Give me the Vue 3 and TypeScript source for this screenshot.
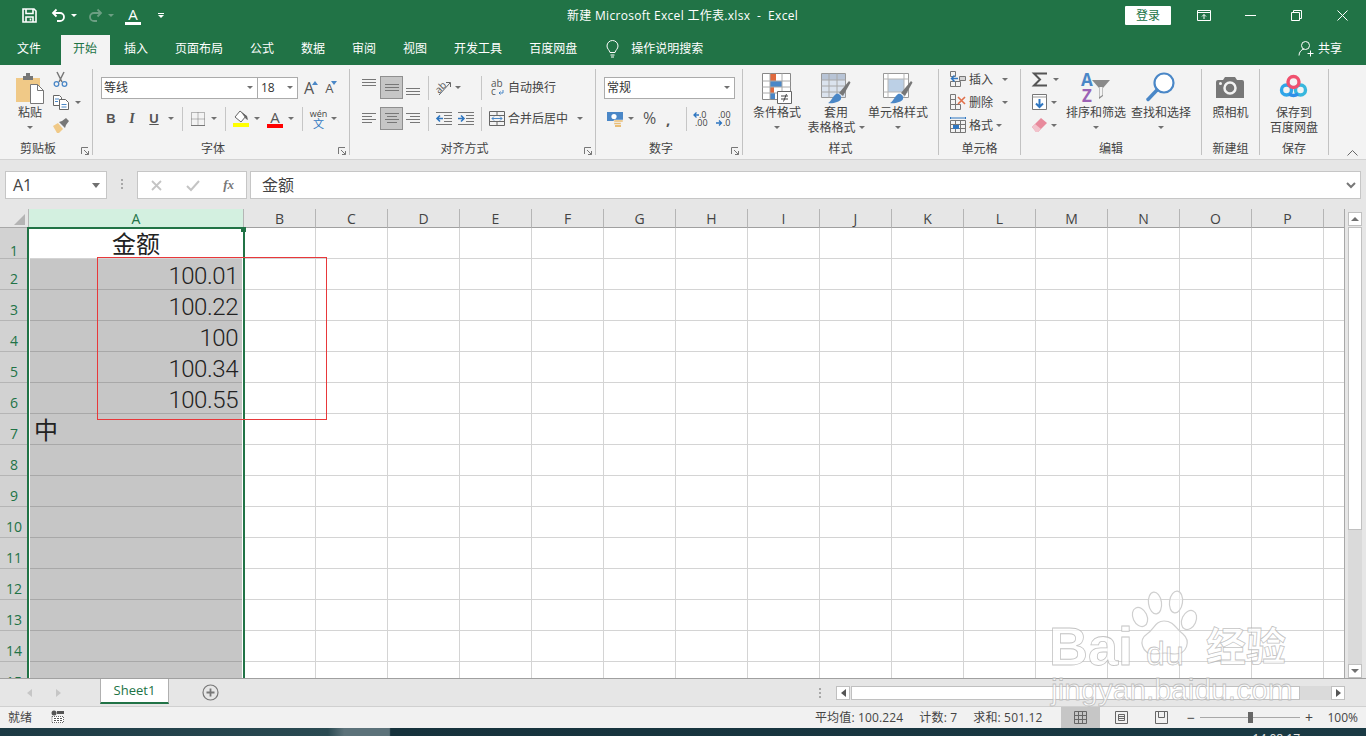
<script setup lang="ts">
const tabs = ['插入', '页面布局', '公式', '数据', '审阅', '视图', '开发工具', '百度网盘']
const colLetters = 'BCDEFGHIJKLMNOP'.split('')
const rows = Array.from({ length: 15 }, (_, i) => i + 1)
const colCount = colLetters.length + 1

const amounts: Record<number, string> = {
  2: '100.01',
  3: '100.22',
  4: '100',
  5: '100.34',
  6: '100.55',
}
</script>

<template>
  <div class="app">
    <!-- title bar -->
    <header class="titlebar">
      <div class="tb-side qa">
        <svg class="w15" width="15" height="15" viewBox="0 0 15 15" fill="none" stroke="#fff" stroke-width="1.6">
          <path d="M1 1h11l2 2v11H1z" />
          <path d="M4 1v4.500h7V1M4 14V9h7v5" />
          <path d="M8.500 10.500v2" />
        </svg>
        <svg class="ml14" width="15" height="15" viewBox="0 0 15 15" fill="none" stroke="#fff" stroke-width="1.8">
          <path d="M5.500 1.500 2 5l3.500 3.500" />
          <path d="M2.500 5H9a4 4 0 0 1 0 8H6" />
        </svg>
        <i class="caret caret-white ml5"></i>
        <svg class="ml11" width="15" height="15" viewBox="0 0 15 15" fill="none" stroke="#6c9f83" stroke-width="1.8">
          <path d="M9.500 1.500 13 5 9.500 8.500" />
          <path d="M12.500 5H6a4 4 0 0 0 0 8h3" />
        </svg>
        <i class="caret caret-dim ml5"></i>
        <span class="qa-font ml11">A</span>
        <span class="qa-more">
          <i class="dash"></i>
          <i class="caret caret-white"></i>
        </span>
      </div>
      <div class="doc-title">新建 Microsoft Excel 工作表.xlsx &nbsp;-&nbsp; Excel</div>
      <div class="tb-side win">
        <button class="login">登录</button>
        <svg class="ml26" width="14" height="11" viewBox="0 0 14 11" fill="none" stroke="#fff">
          <path d="M.5.500h13v10H.5zM.5 2.500h13" />
          <path d="M7 9V4.500M5 6.500l2-2 2 2" />
        </svg>
        <svg class="ml34" width="11" height="11" viewBox="0 0 11 11" stroke="#fff"><path d="M0 5.500h11" /></svg>
        <svg class="ml35" width="11" height="11" viewBox="0 0 11 11" fill="none" stroke="#fff">
          <path d="M.5 2.500h8v8h-8zM2.500 2.500v-2h8v8h-2" />
        </svg>
        <svg class="ml35" width="11" height="11" viewBox="0 0 11 11" stroke="#fff"><path d="M.5.500l10 10M10.500.500l-10 10" /></svg>
      </div>
    </header>

    <nav class="tabbar">
      <span class="tab tab-file">文件</span>
      <span class="tab tab-on">开始</span>
      <span v-for="t in tabs" :key="t" class="tab">{{ t }}</span>
      <svg class="bulb" width="13" height="18" viewBox="0 0 13 18" fill="none" stroke="#fff">
        <path d="M4 12.500C3.500 10 1 9 1 6a5.500 5.500 0 0 1 11 0c0 3-2.500 4-3 6.500z" />
        <path d="M4.500 15h4M5 17h3" />
      </svg>
      <span class="search">操作说明搜索</span>
      <span class="share">
        <svg width="17" height="17" viewBox="0 0 17 17" fill="none" stroke="#fff">
          <circle cx="7.500" cy="5.500" r="4" />
          <path d="M1 15.500c0-3.500 2.500-6 5-6.500M12.500 10.500v6M9.500 13.500h6" />
        </svg>
        共享
      </span>
    </nav>

    <!-- ribbon -->
    <section class="ribbon">
      <div class="group g-clip">
        <div class="group-body">
          <div class="big-btn paste">
            <svg class="big-icon" width="28" height="33" viewBox="0 0 28 33">
              <path d="M0 6h24v24H0z" fill="#f0c987" />
              <path d="M7 4h3V1h4v3h3v4H7z" fill="#767676" />
              <path d="M14.500 12.500h7l6 6v13h-13z" fill="#fff" stroke="#777" />
              <path d="M21.500 12.500v6h6" fill="none" stroke="#777" />
            </svg>
            <span>粘贴</span>
            <span class="line"><i class="caret"></i></span>
          </div>
          <div class="tri-rows clip-side">
            <div class="tri-row">
              <svg width="15" height="16" viewBox="0 0 15 16" fill="none">
                <path d="M4 1l5 10M11 1L6 11" stroke="#777" stroke-width="1.500" />
                <circle cx="3.500" cy="13" r="2.300" stroke="#4a87c7" stroke-width="1.300" />
                <circle cx="11.500" cy="13" r="2.300" stroke="#4a87c7" stroke-width="1.300" />
              </svg>
            </div>
            <div class="tri-row">
              <svg width="16" height="15" viewBox="0 0 16 15" fill="#fff" stroke="#666">
                <path d="M.5.500h6l2 2v8h-8z" />
                <path d="M6.500 4.500h6l3 3v7h-9z" />
                <path d="M2 4h4M2 6.500h3M8.500 9.500h5M8.500 12h5" stroke="#4a87c7" />
              </svg>
              <i class="caret ml6"></i>
            </div>
            <div class="tri-row">
              <svg width="16" height="15" viewBox="0 0 16 15">
                <path d="M0 8l5-3 5 6-4 4H4z" fill="#f0c987" />
                <path d="M6 4l3-1 4-3 3 3-3 4-1 3z" fill="#777" />
              </svg>
            </div>
          </div>
        </div>
        <div class="group-label has-launcher">
          剪贴板
          <svg class="launcher" width="8" height="8" viewBox="0 0 8 8" fill="none" stroke="#777">
            <path d="M.5 7V.5H7M3 3l4.500 4.500M7.500 4v3.500H4" />
          </svg>
        </div>
      </div>

      <div class="group g-font">
        <div class="rows">
          <div class="row">
            <div class="combo combo-font">等线<i class="caret combo-caret"></i></div>
            <div class="combo combo-size">18<i class="caret combo-caret"></i></div>
            <span class="grow-a ml6">A<svg width="6" height="4" viewBox="0 0 6 4"><path d="M0 4l3-4 3 4z" fill="#4a87c7" /></svg></span>
            <span class="shrink-a ml10">A<svg width="6" height="4" viewBox="0 0 6 4"><path d="M0 0l3 4 3-4z" fill="#4a87c7" /></svg></span>
          </div>
          <div class="row">
            <span class="cell w20 fmt fmt-b">B</span>
            <span class="cell w22 fmt fmt-i">I</span>
            <span class="cell w22 fmt fmt-u">U</span>
            <span class="cell w12"><i class="caret"></i></span>
            <span class="cell w11"><i class="vsep"></i></span>
            <span class="cell w19">
              <svg width="14" height="14" viewBox="0 0 14 14" fill="none" stroke="#777" stroke-dasharray="1 1">
                <path d="M.5.500h13v13H.5zM.5 7h13M7 .500v13" />
                <path d="M0 13.500h14" stroke-dasharray="none" />
              </svg>
            </span>
            <span class="cell w14"><i class="caret"></i></span>
            <span class="cell w8"><i class="vsep"></i></span>
            <span class="cell w24">
              <svg width="16" height="17" viewBox="0 0 16 17">
                <path d="M7 1l6 5-5 6-6-5z" fill="#fff" stroke="#666" />
                <path d="M8 2l6 4 1 4-2-1z" fill="#666" />
                <path d="M0 13h16v4H0z" fill="#ffff00" />
              </svg>
            </span>
            <span class="cell w8"><i class="caret"></i></span>
            <span class="cell w28 color-a">A<i class="color-bar"></i></span>
            <span class="cell w4"><i class="caret"></i></span>
            <span class="cell w18"><i class="vsep"></i></span>
            <span class="cell w15 wen"><em>wén</em><b>文</b></span>
            <span class="cell w16"><i class="caret"></i></span>
          </div>
        </div>
        <div class="group-label has-launcher">
          字体
          <svg class="launcher" width="8" height="8" viewBox="0 0 8 8" fill="none" stroke="#777">
            <path d="M.5 7V.5H7M3 3l4.500 4.500M7.500 4v3.500H4" />
          </svg>
        </div>
      </div>

      <div class="group g-align">
        <div class="rows">
          <div class="row">
            <svg width="14" height="23" viewBox="0 0 14 23" stroke="#777"><path d="M0 3.500h14M0 6.500h14M0 9.500h14" /></svg>
            <span class="active-btn ml4">
              <svg width="14" height="21" viewBox="0 0 14 21" stroke="#777"><path d="M0 7.500h14M0 10.500h14M0 13.500h14" /></svg>
            </span>
            <svg class="ml3" width="14" height="23" viewBox="0 0 14 23" stroke="#777"><path d="M0 12.500h14M0 15.500h14M0 18.500h14" /></svg>
            <i class="vsep ml8"></i>
            <svg class="ml7" width="16" height="16" viewBox="0 0 16 16" fill="none">
              <text x="0" y="11" transform="rotate(-45 5 9)" class="svg-txt">ab</text>
              <path d="M3 15L14 3M10 2.500h4.500V7" stroke="#666" />
            </svg>
            <i class="caret ml3"></i>
            <i class="vsep ml20"></i>
            <svg class="ml9" width="13" height="16" viewBox="0 0 13 16" fill="none">
              <text x="0" y="7" class="svg-txt">ab</text>
              <text x="0" y="15" class="svg-txt">c</text>
              <path d="M12 10v3H8M9.500 11.500 8 13l1.500 1.500" stroke="#4a87c7" />
            </svg>
            <span class="ml4">自动换行</span>
          </div>
          <div class="row">
            <svg width="14" height="23" viewBox="0 0 14 23" stroke="#777"><path d="M0 6.500h14M0 9.500h10M0 12.500h14M0 15.500h10" /></svg>
            <span class="active-btn ml4">
              <svg width="14" height="21" viewBox="0 0 14 21" stroke="#777"><path d="M0 5.500h14M2 8.500h10M0 11.500h14M2 14.500h10" /></svg>
            </span>
            <svg class="ml3" width="14" height="23" viewBox="0 0 14 23" stroke="#777"><path d="M0 6.500h14M4 9.500h10M0 12.500h14M4 15.500h10" /></svg>
            <i class="vsep ml8"></i>
            <svg class="ml7" width="16" height="14" viewBox="0 0 16 14" fill="none">
              <path d="M0 .500h16M8 3.500h8M8 6.500h8M8 9.500h8M0 12.500h16" stroke="#777" />
              <path d="M7 6.500H1M4 3.500l-3 3 3 3" stroke="#2f76c0" stroke-width="1.600" />
            </svg>
            <svg class="ml6" width="16" height="14" viewBox="0 0 16 14" fill="none">
              <path d="M0 .500h16M8 3.500h8M8 6.500h8M8 9.500h8M0 12.500h16" stroke="#777" />
              <path d="M0 6.500h6M3 3.500l3 3-3 3" stroke="#2f76c0" stroke-width="1.600" />
            </svg>
            <i class="vsep ml7"></i>
            <svg class="ml7" width="16" height="15" viewBox="0 0 16 15" fill="none">
              <path d="M.5.500h15v14H.5zM.5 4.500h15M.5 10.500h15M8 .500v4M8 10.500v4" stroke="#666" />
              <path d="M3 7.500h10M5 5.500l-2 2 2 2M11 5.500l2 2-2 2" stroke="#4a87c7" />
            </svg>
            <span class="ml3">合并后居中</span>
            <i class="caret ml9"></i>
          </div>
        </div>
        <div class="group-label has-launcher">
          对齐方式
          <svg class="launcher" width="8" height="8" viewBox="0 0 8 8" fill="none" stroke="#777">
            <path d="M.5 7V.5H7M3 3l4.500 4.500M7.500 4v3.500H4" />
          </svg>
        </div>
      </div>

      <div class="group g-num">
        <div class="rows">
          <div class="row">
            <div class="combo combo-num">常规<i class="caret combo-caret"></i></div>
          </div>
          <div class="row">
            <svg class="ml3" width="16" height="16" viewBox="0 0 16 16">
              <path d="M0 1h16v9H0z" fill="#4a87c7" />
              <circle cx="7" cy="5.500" r="2.600" fill="#fff" />
              <path d="M7 9h9v2H7zM7 11.500h7v2H7z" fill="#e9bd75" stroke="#f3f3f3" stroke-width=".5" />
              <path d="M8 14h6v2H8z" fill="#e9bd75" />
            </svg>
            <i class="caret ml5"></i>
            <span class="percent ml9">%</span>
            <span class="comma ml10">,</span>
            <i class="vsep ml12"></i>
            <svg class="ml7" width="15" height="16" viewBox="0 0 15 16" fill="none">
              <text x="5" y="7" class="svg-dec">.0</text>
              <text x="1" y="15" class="svg-dec">.00</text>
              <path d="M5 4H0M2.500 1.500 0 4l2.500 2.500" stroke="#2f76c0" stroke-width="1.300" />
            </svg>
            <svg class="ml7" width="15" height="16" viewBox="0 0 15 16" fill="none">
              <text x="2" y="7" class="svg-dec">.00</text>
              <text x="7" y="15" class="svg-dec">.0</text>
              <path d="M0 12h5M3 9.500 5.500 12 3 14.500" stroke="#2f76c0" stroke-width="1.300" />
            </svg>
          </div>
        </div>
        <div class="group-label has-launcher">
          数字
          <svg class="launcher" width="8" height="8" viewBox="0 0 8 8" fill="none" stroke="#777">
            <path d="M.5 7V.5H7M3 3l4.500 4.500M7.500 4v3.500H4" />
          </svg>
        </div>
      </div>

      <div class="group g-style">
        <div class="group-body">
          <div class="big-btn w60">
            <svg class="big-icon" width="30" height="31" viewBox="0 0 30 31" fill="none">
              <path d="M.5.500h28v26H.5z" fill="#fff" stroke="#888" />
              <path d="M8 1h6v7H8z" fill="#e06a3e" />
              <path d="M8 8h12v6H8z" fill="#4a87c7" />
              <path d="M8 14h4v6H8z" fill="#e06a3e" />
              <path d="M8 20h5v6H8z" fill="#4a87c7" />
              <path d="M.5 8h28M.5 14h28M.5 20h28M8 .500v26M20 .500v26" stroke="#aaa" />
              <path d="M15.500 18.500h14v12h-14z" fill="#fff" stroke="#666" />
              <path d="M19 23h7M19 26h7M24.500 21l-3 7.500" stroke="#444" />
            </svg>
            <span>条件格式</span>
            <span class="line"><i class="caret"></i></span>
          </div>
          <div class="big-btn w58">
            <svg class="big-icon" width="30" height="31" viewBox="0 0 30 31" fill="none">
              <path d="M.5.500h24v24H.5z" fill="#fff" stroke="#999" />
              <path d="M1 1h23v6H1z" fill="#b8c4d6" />
              <path d="M1 7h23v17H1z" fill="#dbe3ee" />
              <path d="M.5 7h24M.5 13h24M.5 19h24M8 .500v24M16 .500v24" stroke="#a8a8a8" />
              <path d="M18 20L28 8l1.500 1.500L22 23z" fill="#777" />
              <path d="M7 30c3-1 4-6 8-9 3-1 6 2 5 5-1 3-9 5-13 4z" fill="#4a87c7" />
            </svg>
            <span>套用</span>
            <span class="line nowrap">表格格式<i class="caret ml3"></i></span>
          </div>
          <div class="big-btn w66">
            <svg class="big-icon" width="30" height="31" viewBox="0 0 30 31" fill="none">
              <path d="M.5.500h25v24H.5z" fill="#fff" stroke="#999" />
              <path d="M5 6h16v13H5z" fill="#bcd0e6" />
              <path d="M.5 6h25M.5 19h25M5 .500v24M21 .500v24" stroke="#b5b5b5" />
              <path d="M18 20L28 8l1.500 1.500L22 23z" fill="#777" />
              <path d="M7 30c3-1 4-6 8-9 3-1 6 2 5 5-1 3-9 5-13 4z" fill="#4a87c7" />
            </svg>
            <span>单元格样式</span>
            <span class="line"><i class="caret"></i></span>
          </div>
        </div>
        <div class="group-label">样式</div>
      </div>

      <div class="group g-cells">
        <div class="tri-rows">
          <div class="tri-row">
            <svg width="16" height="16" viewBox="0 0 16 16" fill="none">
              <path d="M.5.500h5v5h-5zM.5 10.500h5v5h-5zM5.500 10.500h5v5h-5z" stroke="#777" />
              <path d="M9.500 5.500h6v4h-6z" stroke="#777" fill="#d5d5d5" />
              <path d="M8 7.500H1.500M4.500 4.500l-3 3 3 3" stroke="#2f76c0" stroke-width="1.500" />
            </svg>
            <span class="ml3">插入</span>
            <i class="caret ml9"></i>
          </div>
          <div class="tri-row">
            <svg width="16" height="16" viewBox="0 0 16 16" fill="none">
              <path d="M.5.500h5v5h-5zM.5 5.500h5v5h-5zM.5 10.500h5v5h-5zM5.500 10.500h5v5h-5z" stroke="#777" />
              <path d="M8 3l7 7M15 3l-7 7" stroke="#e0704a" stroke-width="1.600" />
            </svg>
            <span class="ml3">删除</span>
            <i class="caret ml9"></i>
          </div>
          <div class="tri-row">
            <svg width="16" height="16" viewBox="0 0 16 16" fill="none">
              <path d="M.5 1h15M.5 0v2M15.500 0v2" stroke="#2f76c0" />
              <path d="M.5 3.500h15v12H.5zM.5 7.500h15M.5 11.500h15M5.500 3.500v12M10.500 3.500v12" stroke="#777" />
              <path d="M3 8h6v4H3z" fill="#2f76c0" />
            </svg>
            <span class="ml3">格式</span>
            <i class="caret ml3"></i>
          </div>
        </div>
        <div class="group-label">单元格</div>
      </div>

      <div class="group g-edit">
        <div class="group-body">
          <div class="tri-rows edit-side">
            <div class="tri-row">
              <svg width="15" height="15" viewBox="0 0 15 15" fill="none" stroke="#555" stroke-width="2">
                <path d="M15 1.500H2L8 7.500 2 13.500h13" />
              </svg>
              <i class="caret ml6"></i>
            </div>
            <div class="tri-row">
              <svg width="15" height="16" viewBox="0 0 15 16" fill="none">
                <path d="M.5.500h14v15H.5z" fill="#fff" stroke="#777" />
                <path d="M.5 3h14" stroke="#999" />
                <path d="M7.500 5v8M4 9.500 7.500 13 11 9.500" stroke="#2f76c0" stroke-width="2" />
              </svg>
              <i class="caret ml4"></i>
            </div>
            <div class="tri-row">
              <svg width="15" height="14" viewBox="0 0 15 14">
                <path d="M0 9l9-9 6 5-9 9H4z" fill="#e88a9c" />
                <path d="M0 9l3-3 6 5-3 3H4z" fill="#f2c2cb" />
              </svg>
              <i class="caret ml4"></i>
            </div>
          </div>
          <div class="big-btn w62">
            <svg class="big-icon" width="30" height="33" viewBox="0 0 30 33" fill="none">
              <text x="0" y="14" class="svg-az az-a">A</text>
              <text x="1" y="30" class="svg-az az-z">Z</text>
              <path d="M11 8h18l-7 8v8l-4 3V16z" fill="#8a8a8a" />
              <path d="M18.500 15h3v8l-3 2z" fill="#f3f3f3" />
            </svg>
            <span>排序和筛选</span>
            <span class="line"><i class="caret"></i></span>
          </div>
          <div class="big-btn w62 ml3">
            <svg class="big-icon" width="30" height="33" viewBox="0 0 30 33" fill="none">
              <circle cx="18" cy="11" r="9.500" fill="#fff" stroke="#4a87c7" stroke-width="2.200" />
              <path d="M11 18 2 27.500" stroke="#4a87c7" stroke-width="3.500" stroke-linecap="round" />
            </svg>
            <span>查找和选择</span>
            <span class="line"><i class="caret"></i></span>
          </div>
        </div>
        <div class="group-label">编辑</div>
      </div>

      <div class="group g-new">
        <div class="group-body center">
          <div class="big-btn">
            <svg class="big-icon" width="28" height="33" viewBox="0 0 28 33">
              <path d="M0 10q0-2 2-2h5l2-3h10l2 3h5q2 0 2 2v16H0z" fill="#777" />
              <circle cx="4.500" cy="11.500" r="1.500" fill="#f3f3f3" />
              <circle cx="14" cy="16" r="5.500" fill="#777" stroke="#f3f3f3" stroke-width="2.500" />
            </svg>
            <span>照相机</span>
          </div>
        </div>
        <div class="group-label">新建组</div>
      </div>

      <div class="group g-save">
        <div class="group-body center">
          <div class="big-btn">
            <svg class="big-icon" width="27" height="33" viewBox="0 0 27 33" fill="none" stroke-width="3.400">
              <circle cx="6.500" cy="18" r="5" stroke="#2fa5e8" />
              <circle cx="20.500" cy="18" r="5" stroke="#38b7dd" />
              <circle cx="13.500" cy="10" r="5.500" stroke="#f0506e" />
              <path d="M9 22q4.500 3 9 0" stroke="#2f8fe8" />
            </svg>
            <span>保存到</span>
            <span>百度网盘</span>
          </div>
        </div>
        <div class="group-label">保存</div>
      </div>

      <svg class="collapse" width="11" height="6" viewBox="0 0 11 6" fill="none" stroke="#666"><path d="M.5 5.500l5-5 5 5" /></svg>
    </section>

    <!-- formula bar -->
    <section class="formula">
      <div class="fx-box namebox">A1<i class="caret caret-big"></i></div>
      <div class="fx-dots"><i></i><i></i><i></i></div>
      <div class="fx-box fx-btns">
        <svg width="11" height="11" viewBox="0 0 11 11" stroke="#c4c4c4" stroke-width="1.800"><path d="M1 1l9 9M10 1l-9 9" /></svg>
        <svg width="14" height="11" viewBox="0 0 14 11" fill="none" stroke="#c4c4c4" stroke-width="2"><path d="M1 6l4 4 8-9" /></svg>
        <span class="fx-label">fx</span>
      </div>
      <div class="fx-box fx-input">
        金额
        <svg class="fx-chev" width="10" height="7" viewBox="0 0 10 7" fill="none" stroke="#777" stroke-width="2"><path d="M1 1l4 4 4-4" /></svg>
      </div>
    </section>

    <!-- sheet -->
    <section class="sheet">
      <div class="grid-wrap">
        <div class="grid">
          <div class="corner"><i></i></div>
          <div class="col-head col-head-on">A</div>
          <div v-for="c in colLetters" :key="c" class="col-head">{{ c }}</div>
          <div class="col-head col-head-end"></div>
          <template v-for="r in rows" :key="r">
            <div class="row-head" :class="{ 'row-head-first': r === 1 }">{{ r }}</div>
            <div class="cell-a" :class="{ 'cell-title': r === 1, 'cell-mark': r === 7, 'cell-num': amounts[r] }">
              <template v-if="r === 1">金额</template>
              <template v-else-if="r === 7">中</template>
              <template v-else>{{ amounts[r] }}</template>
            </div>
            <div v-for="n in colCount" :key="n" class="blank" :class="{ 'blank-end': n === colCount }"></div>
          </template>
        </div>
        <div class="selection"><i class="handle"></i></div>
        <div class="red-box"></div>
      </div>
      <aside class="vscroll">
        <span class="sb-btn"><i class="tri tri-up"></i></span>
        <span class="v-thumb"></span>
        <span class="v-track"></span>
        <span class="sb-btn"><i class="tri tri-down"></i></span>
      </aside>
    </section>

    <!-- sheet tabs -->
    <section class="sheetbar">
      <i class="tri tri-left nav-l"></i>
      <i class="tri tri-right nav-r"></i>
      <span class="sheet-tab">Sheet1</span>
      <svg class="add" width="17" height="17" viewBox="0 0 17 17" fill="none" stroke="#777">
        <circle cx="8.500" cy="8.500" r="7.500" stroke-width="1.200" />
        <path d="M8.500 4.500v8M4.500 8.500h8" stroke-width="1.800" />
      </svg>
      <div class="hscroll-wrap">
        <div class="fx-dots"><i></i><i></i><i></i></div>
        <div class="hscroll">
          <span class="sb-btn"><i class="tri tri-left dark"></i></span>
          <span class="h-thumb"></span>
          <span class="h-track"></span>
          <span class="sb-btn"><i class="tri tri-right dark"></i></span>
        </div>
      </div>
    </section>

    <!-- status bar -->
    <footer class="status">
      <span class="ready">就绪</span>
      <svg class="macro" width="13" height="13" viewBox="0 0 13 13">
        <circle cx="3" cy="3" r="2.500" fill="#555" />
        <path d="M6 1h7v3H6z" fill="#555" />
        <path d="M1 6.500h11.500v6H1z" fill="#fff" stroke="#666" stroke-dasharray="1 1" />
        <path d="M3 8h2v1H3zM6 8h2v1H6zM9 8h2v1H9zM3 10h2v1H3zM6 10h2v1H6zM9 10h2v1H9z" fill="#555" />
      </svg>
      <span class="stat stat-first">平均值: 100.224</span>
      <span class="stat">计数: 7</span>
      <span class="stat">求和: 501.12</span>
      <span class="view view-on">
        <svg width="13" height="13" viewBox="0 0 13 13" fill="none" stroke="#666"><path d="M.5.500h12v12H.5zM.5 4.500h12M.5 8.500h12M4.500.500v12M8.500.500v12" /></svg>
      </span>
      <span class="view">
        <svg width="13" height="13" viewBox="0 0 13 13" fill="none" stroke="#666"><path d="M.5.500h12v12H.5zM3.500 3.500h6v6h-6zM3.500 5.500h6M3.500 7.500h6" /></svg>
      </span>
      <span class="view">
        <svg width="13" height="13" viewBox="0 0 13 13" fill="none" stroke="#666"><path d="M.5.500h12v12H.5zM3.500.500v6h6v-6" /></svg>
      </span>
      <span class="zoom-minus">−</span>
      <span class="slider"><i class="thumb"></i></span>
      <span class="zoom-plus">+</span>
      <span class="pct">100%</span>
    </footer>
    <div class="desktop"><span>14:08:17</span></div>

    <!-- baidu watermark lying over the page -->
    <div class="watermark">
      <svg class="paw" width="72" height="72" viewBox="0 0 72 72" fill="rgba(255,255,255,.55)" stroke="#cfcfcf" stroke-width="1.200">
        <ellipse cx="25" cy="13" rx="6.500" ry="11" transform="rotate(-8 25 13)" />
        <ellipse cx="46" cy="12" rx="6.500" ry="11" transform="rotate(8 46 12)" />
        <ellipse cx="10" cy="27" rx="7" ry="10" transform="rotate(-25 10 27)" />
        <ellipse cx="59" cy="30" rx="7" ry="10" transform="rotate(25 59 30)" />
        <path d="M34 31c10 0 12 8 19 13 8 7 4 20-8 20-4 0-7-1-10-1s-7 1-11 1C12 64 8 50 17 44c7-4 8-13 17-13z" />
      </svg>
      <span class="wm wm-bai">Bai</span>
      <span class="wm wm-du">du</span>
      <span class="wm wm-jy">经验</span>
      <span class="wm wm-url">jingyan.baidu.com</span>
    </div>
  </div>
</template>

<style>
html,
body {
  margin: 0;
  background: #fff;
}
</style>

<style scoped>
.app {
  position: relative;
  width: 1366px;
  height: 736px;
  overflow: hidden;
  display: flex;
  flex-direction: column;
  font-family: "Open Sans", "Noto Sans CJK SC", sans-serif;
  font-size: 12px;
  color: #444;
  line-height: 15px;
}

svg,
i {
  flex: none;
  display: block;
}

svg {
  overflow: visible;
}

.titlebar {
  height: 31px;
  padding-bottom: 4px;
  background: #217346;
  color: #fff;
  display: flex;
  align-items: center;
}

.tb-side {
  flex: 1 1 0;
  display: flex;
  align-items: center;
}

.qa {
  padding-left: 22px;
}

.qa-font {
  width: 16px;
  height: 18px;
  margin-left: 11px;
  text-align: center;
  font: 15px/15px "Open Sans", sans-serif;
  border-bottom: 3px solid #fff;
  box-sizing: border-box;
}

.qa-more {
  margin-left: 17px;
  display: flex;
  flex-direction: column;
  gap: 1px;
  align-items: center;
}

.dash {
  width: 6px;
  height: 1px;
  background: #fff;
}

.doc-title {
  white-space: nowrap;
  letter-spacing: 0.3px;
  margin-right: 5px;
}

.win {
  justify-content: flex-end;
  padding-right: 18px;
}

.login {
  width: 46px;
  height: 19px;
  border: 0;
  border-radius: 1px;
  background: #fff;
  color: #217346;
  font: inherit;
  padding: 0;
}

.tabbar {
  height: 30px;
  background: #217346;
  color: #fff;
  display: flex;
  align-items: center;
  padding-left: 5px;
}

.tab {
  height: 30px;
  line-height: 27px;
  padding: 0 12px;
  margin-right: 3px;
  box-sizing: border-box;
}

.tab-file {
  margin-right: 8px;
}

.tab-on {
  width: 49px;
  margin-right: 2px;
  background: #f3f3f3;
  color: #217346;
}

.bulb {
  margin-left: 14px;
  margin-bottom: 2px;
}

.search {
  margin-left: 12px;
  margin-bottom: 3px;
}

.share {
  margin-left: auto;
  margin-right: 24px;
  margin-bottom: 3px;
  display: flex;
  align-items: center;
  gap: 3px;
}

.ribbon {
  height: 94px;
  background: #f3f3f3;
  border-bottom: 1px solid #d2d2d2;
  display: flex;
  align-items: flex-start;
}

.group {
  height: 86px;
  margin-top: 4px;
  box-sizing: border-box;
  border-right: 1px solid #c2c2c2;
  display: flex;
  flex-direction: column;
  flex: none;
}

.group-body {
  flex: 1;
  display: flex;
  min-height: 0;
}

.center {
  justify-content: center;
}

.group-label {
  position: relative;
  height: 16px;
  line-height: 19px;
  text-align: center;
}

.has-launcher {
  padding-right: 16px;
}

.launcher {
  position: absolute;
  right: 3px;
  bottom: 0;
}

.g-clip {
  width: 93px;
}

.g-font {
  width: 257px;
  padding-left: 8px;
}

.g-align {
  width: 246px;
  padding-left: 12px;
}

.g-num {
  width: 147px;
  padding-left: 8px;
}

.g-style {
  width: 196px;
  padding-left: 4px;
}

.g-cells {
  width: 82px;
  padding-left: 11px;
}

.g-edit {
  width: 181px;
  padding-left: 11px;
}

.g-new {
  width: 58px;
}

.g-save {
  width: 69px;
}

.g-font .group-label,
.g-num .group-label {
  margin-left: -8px;
}

.g-align .group-label {
  margin-left: -12px;
}

.g-style .group-label {
  margin-left: -4px;
}

.g-cells .group-label,
.g-edit .group-label {
  margin-left: -11px;
}

.rows {
  flex: 1;
  padding-top: 7px;
  display: flex;
  flex-direction: column;
  gap: 8px;
}

.row {
  display: flex;
  align-items: center;
  height: 23px;
  white-space: nowrap;
}

.tri-rows {
  flex: 1;
  display: flex;
  flex-direction: column;
  gap: 3px;
}

.tri-row {
  height: 20px;
  display: flex;
  align-items: center;
  white-space: nowrap;
}

.clip-side {
  margin-left: 8px;
}

.edit-side {
  flex: none;
  width: 33px;
}

.big-btn {
  flex: none;
  display: flex;
  flex-direction: column;
  align-items: center;
  padding-top: 3px;
  white-space: nowrap;
}

.big-icon {
  height: 33px;
}

.line {
  height: 15px;
  display: flex;
  align-items: center;
  justify-content: center;
}

.paste {
  width: 30px;
  margin-left: 15px;
}

.w60 {
  width: 60px;
}

.w58 {
  width: 58px;
}

.w66 {
  width: 66px;
}

.w62 {
  width: 62px;
}

.caret {
  width: 0;
  height: 0;
  border-left: 3.5px solid transparent;
  border-right: 3.5px solid transparent;
  border-top: 3.5px solid #707070;
}

.caret-white {
  border-top-color: #fff;
  border-left-width: 3px;
  border-right-width: 3px;
  border-top-width: 3px;
}

.caret-dim {
  border-top-color: #6c9f83;
  border-left-width: 3px;
  border-right-width: 3px;
  border-top-width: 3px;
}

.caret-big {
  margin-left: auto;
  border-left-width: 4px;
  border-right-width: 4px;
  border-top-width: 5px;
  margin-right: 6px;
}

.vsep {
  width: 1px;
  height: 24px;
  background: #c6c6c6;
}

.ml3 { margin-left: 3px; }
.ml4 { margin-left: 4px; }
.ml5 { margin-left: 5px; }
.ml6 { margin-left: 6px; }
.ml7 { margin-left: 7px; }
.ml8 { margin-left: 8px; }
.ml9 { margin-left: 9px; }
.ml10 { margin-left: 10px; }
.ml11 { margin-left: 11px; }
.ml12 { margin-left: 12px; }
.ml14 { margin-left: 14px; }
.ml20 { margin-left: 20px; }
.ml26 { margin-left: 26px; }
.ml34 { margin-left: 34px; }
.ml35 { margin-left: 35px; }

.cell {
  display: flex;
  align-items: center;
  justify-content: center;
  flex: none;
  height: 23px;
}

.w4 { width: 4px; }
.w8 { width: 8px; }
.w11 { width: 11px; }
.w12 { width: 12px; }
.w14 { width: 14px; }
.w15 { width: 15px; }
.w16 { width: 16px; }
.w18 { width: 18px; }
.w19 { width: 19px; }
.w20 { width: 20px; }
.w22 { width: 22px; }
.w24 { width: 24px; }
.w28 { width: 28px; }

.combo {
  height: 22px;
  box-sizing: border-box;
  border: 1px solid #ababab;
  background: #fff;
  display: flex;
  align-items: center;
  padding-left: 2px;
  color: #333;
}

.combo-font {
  width: 157px;
}

.combo-size {
  width: 41px;
  margin-left: -1px;
  padding-left: 3px;
}

.combo-num {
  width: 131px;
  padding-left: 2px;
}

.combo-caret {
  margin-left: auto;
  margin-right: 4px;
}

.grow-a,
.shrink-a {
  display: flex;
  align-items: flex-start;
  font-size: 16px;
  color: #555;
  line-height: 20px;
}

.grow-a svg,
.shrink-a svg {
  margin-left: -2px;
  margin-top: 3px;
}

.shrink-a {
  font-size: 13px;
}

.shrink-a.ml10 {
  margin-left: 7px;
}

.fmt {
  font: bold 13px "Liberation Sans", sans-serif;
  color: #555;
}

.fmt-i {
  font-style: italic;
  font-family: "Liberation Serif", serif;
  font-size: 14px;
}

.fmt-u {
  text-decoration: underline;
}

.color-a {
  position: relative;
  flex-direction: column;
  font-size: 15px;
  line-height: 14px;
  color: #555;
}

.color-bar {
  width: 16px;
  height: 4px;
  background: #ff0000;
}

.wen {
  flex-direction: column;
  line-height: 9px;
}

.wen em {
  font-style: normal;
  font-size: 9px;
}

.wen b {
  font-weight: normal;
  font-size: 11px;
  line-height: 11px;
  color: #2f76c0;
}

.active-btn {
  width: 23px;
  height: 23px;
  box-sizing: border-box;
  border: 1px solid #8f8f8f;
  background: #c6c6c6;
  display: flex;
  align-items: center;
  justify-content: center;
}

.svg-txt {
  font: 10px "Open Sans", sans-serif;
  fill: #555;
}

.svg-dec {
  font: 9px "Open Sans", sans-serif;
  fill: #444;
}

.svg-az {
  font: bold 17px "Open Sans", sans-serif;
}

.az-a {
  fill: #4a87c7;
}

.az-z {
  fill: #9b62b5;
}

.percent {
  font-size: 16px;
  color: #555;
  width: 13px;
}

.comma {
  font-size: 15px;
  font-weight: bold;
  color: #555;
  width: 8px;
  line-height: 10px;
}

.nowrap {
  white-space: nowrap;
}

.collapse {
  margin-left: 18px;
  margin-top: 85px;
}

.formula {
  height: 49px;
  box-sizing: border-box;
  padding: 11px 5px 0;
  background: #e6e6e6;
  display: flex;
  align-items: flex-start;
}

.fx-box {
  height: 28px;
  box-sizing: border-box;
  background: #fff;
  border: 1px solid #c6c6c6;
  display: flex;
  align-items: center;
}

.namebox {
  width: 102px;
  padding-left: 7px;
  font-size: 16px;
  color: #444;
}

.fx-dots {
  width: 30px;
  display: flex;
  flex-direction: column;
  align-items: center;
  gap: 2px;
  padding-top: 8px;
}

.fx-dots i {
  width: 2px;
  height: 2px;
  background: #a8a8a8;
}

.fx-btns {
  width: 110px;
  padding: 0 12px 0 13px;
  justify-content: space-between;
}

.fx-label {
  font: italic bold 13px "Liberation Serif", serif;
  color: #777;
}

.fx-input {
  width: 1111px;
  margin-left: 3px;
  padding-left: 11px;
  font-size: 16px;
  color: #444;
}

.fx-chev {
  margin-left: auto;
  margin-right: 4px;
}

.sheet {
  height: 469px;
  display: flex;
  background: #e6e6e6;
}

.grid-wrap {
  position: relative;
  width: 1345px;
  height: 469px;
  overflow: hidden;
  border-right: 1px solid #a8a8a8;
  box-sizing: border-box;
}

.grid {
  display: grid;
  grid-template-columns: 29px 215px repeat(15, 72px) 1fr;
  grid-template-rows: 19px repeat(15, 31px);
  background: #fff;
}

.corner {
  background: #e6e6e6;
  border-bottom: 1px solid #a8a8a8;
  border-right: 1px solid #b5b5b5;
  box-sizing: border-box;
  position: relative;
}

.corner i {
  position: absolute;
  right: 3px;
  bottom: 2px;
  width: 0;
  height: 0;
  border-left: 11px solid transparent;
  border-bottom: 11px solid #b4b4b4;
}

.col-head {
  box-sizing: border-box;
  background: #e6e6e6;
  border-right: 1px solid #b5b5b5;
  border-bottom: 1px solid #a0a0a0;
  text-align: center;
  font-size: 14px;
  line-height: 20px;
  color: #444;
}

.col-head-on {
  background: #d3f0e0;
  color: #217346;
}

.col-head-end {
  border-right: 0;
}

.row-head {
  box-sizing: border-box;
  background: #d2d2d2;
  border-right: 1px solid #a0a0a0;
  border-bottom: 1px solid #b5b5b5;
  color: #217346;
  font-size: 14px;
  line-height: 15px;
  padding-top: 12px;
  text-align: center;
}

.row-head-first {
  padding-top: 15px;
}

.cell-a {
  box-sizing: border-box;
  background: #c6c6c6;
  border-bottom: 1px solid #a8a8a8;
  border-right: 1px solid #a8a8a8;
  font-family: "Liberation Sans", "Noto Sans CJK SC", sans-serif;
  font-size: 24px;
  line-height: 26px;
  color: #222;
  display: flex;
  align-items: flex-end;
}

.cell-title {
  background: #fff;
  justify-content: center;
  border-bottom-color: #d4d4d4;
}

.cell-mark {
  padding-left: 5px;
}

.cell-num {
  justify-content: flex-end;
  padding-right: 5px;
  letter-spacing: -0.45px;
  font-family: "Roboto", "Liberation Sans", sans-serif;
  font-weight: 300;
}

.blank {
  box-sizing: border-box;
  border-right: 1px solid #d4d4d4;
  border-bottom: 1px solid #d4d4d4;
}

.blank-end {
  border-right: 0;
}

.selection {
  position: absolute;
  left: 27px;
  top: 18px;
  width: 214px;
  height: 470px;
  border: 2px solid #217346;
  box-shadow: inset 0 0 0 1px #fff;
}

.handle {
  position: absolute;
  right: -3px;
  top: -2px;
  width: 5px;
  height: 5px;
  background: #217346;
}

.red-box {
  position: absolute;
  left: 97px;
  top: 48px;
  width: 230px;
  height: 163px;
  border: 1px solid #e8383a;
  box-sizing: border-box;
}

.vscroll {
  width: 21px;
  box-sizing: border-box;
  padding: 3px 4px 0 3px;
  display: flex;
  flex-direction: column;
}

.sb-btn {
  flex: none;
  width: 14px;
  height: 14px;
  box-sizing: border-box;
  background: #fff;
  border: 1px solid #c0c0c0;
  display: flex;
  align-items: center;
  justify-content: center;
}

.tri {
  width: 0;
  height: 0;
  border: 4px solid transparent;
}

.tri-up {
  border-top: 0;
  border-bottom: 4px solid #707070;
}

.tri-down {
  border-bottom: 0;
  border-top: 4px solid #707070;
}

.tri-left {
  border-left: 0;
  border-right: 5px solid #c6c6c6;
}

.tri-right {
  border-right: 0;
  border-left: 5px solid #c6c6c6;
}

.tri-left.dark {
  border-right-color: #555;
}

.tri-right.dark {
  border-left-color: #555;
}

.v-thumb {
  width: 14px;
  height: 303px;
  margin-top: 1px;
  box-sizing: border-box;
  background: #fff;
  border: 1px solid #c0c0c0;
}

.v-track {
  flex: 1;
  width: 14px;
  background: #dadada;
}

.sheetbar {
  height: 28px;
  box-sizing: border-box;
  background: #e6e6e6;
  border-top: 1px solid #a0a0a0;
  display: flex;
  align-items: center;
  padding-left: 27px;
  position: relative;
}

.nav-r {
  margin-left: 24px;
}

.sheet-tab {
  margin-left: 39px;
  width: 69px;
  height: 25px;
  align-self: flex-start;
  box-sizing: border-box;
  background: #fff;
  border: 1px solid #b0b0b0;
  border-top: 0;
  border-bottom: 2px solid #217346;
  text-align: center;
  color: #217346;
  font-size: 13px;
  line-height: 23px;
}

.add {
  margin-left: 33px;
}

.hscroll-wrap {
  margin-left: auto;
  display: flex;
  align-items: center;
  margin-right: 21px;
}

.hscroll-wrap .fx-dots {
  width: 22px;
  padding-top: 0;
  margin-right: 5px;
}

.hscroll {
  width: 509px;
  display: flex;
  align-items: center;
}

.h-thumb {
  width: 449px;
  height: 14px;
  box-sizing: border-box;
  background: #fff;
  border: 1px solid #c0c0c0;
  margin-left: 1px;
}

.h-track {
  flex: 1;
  height: 14px;
  background: #dadada;
}

.status {
  height: 22px;
  box-sizing: border-box;
  background: #f1f1f1;
  border-top: 1px solid #d0d0d0;
  display: flex;
  align-items: center;
  padding-left: 8px;
}

.ready {
  width: 43px;
}

.macro {
  margin-bottom: 2px;
}

.stat {
  margin-left: 16px;
  white-space: nowrap;
  letter-spacing: 0.15px;
}

.stat-first {
  margin-left: auto;
}

.view {
  width: 40px;
  height: 21px;
  display: flex;
  align-items: center;
  justify-content: center;
}

.view-on {
  margin-left: 19px;
  width: 39px;
  margin-right: 1px;
  background: #c6c6c6;
}

.zoom-minus {
  margin-left: 5px;
  width: 9px;
  text-align: center;
  font-size: 14px;
}

.slider {
  position: relative;
  width: 100px;
  height: 1px;
  margin-left: 5px;
  background: #a8a8a8;
}

.thumb {
  position: absolute;
  left: 48px;
  top: -5px;
  width: 5px;
  height: 11px;
  background: #666;
}

.zoom-plus {
  margin-left: 4px;
  width: 9px;
  text-align: center;
  font-size: 14px;
}

.pct {
  margin-left: 14px;
  margin-right: 8px;
  white-space: nowrap;
}

.desktop {
  height: 8px;
  overflow: hidden;
  background: linear-gradient(90deg, #1c3a44 0, #2a4a52 24%, #5c727a 25.200%, #5c727a 28.500%, #16323c 28.600%, #1a3a44 100%);
  display: flex;
  justify-content: flex-end;
  padding-right: 66px;
  color: #e6e6e6;
  padding-top: 3px;
  box-sizing: border-box;
}

.watermark {
  position: absolute;
  left: 0;
  top: 0;
  width: 1366px;
  height: 736px;
  pointer-events: none;
  overflow: hidden;
}

.paw {
  position: absolute;
  left: 1130px;
  top: 590px;
}

.wm {
  position: absolute;
  color: rgba(255, 255, 255, 0.7);
  -webkit-text-stroke: 0.8px rgba(175, 175, 175, 0.75);
  white-space: nowrap;
  font-family: "Liberation Sans", "Noto Sans CJK SC", sans-serif;
  font-weight: bold;
}

.wm-bai {
  left: 1049px;
  top: 620px;
  font-size: 54px;
  line-height: 52px;
}

.wm-du {
  left: 1146px;
  top: 636px;
  font-size: 34px;
  line-height: 34px;
  font-weight: normal;
}

.wm-jy {
  left: 1206px;
  top: 624px;
  font-size: 40px;
  line-height: 46px;
}

.wm-url {
  left: 1051px;
  top: 674px;
  font-size: 30px;
  line-height: 32px;
  font-weight: normal;
}
</style>
